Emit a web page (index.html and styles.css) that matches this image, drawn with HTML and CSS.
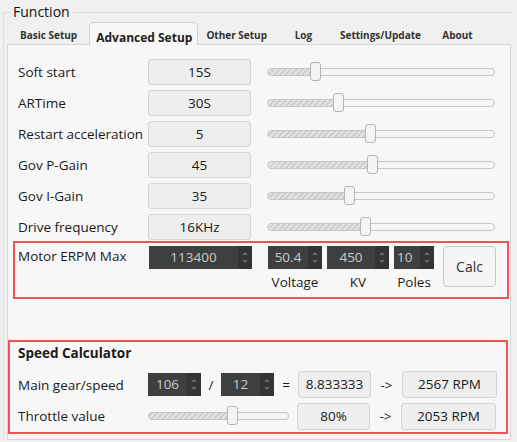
FILE: index.html
```html
<!DOCTYPE html>
<html lang="en">
<head>
    <meta charset="UTF-8">
    <title>Function</title>
    <link rel="stylesheet" href="styles.css">
</head>
<body>
    <fieldset class="group">
        <legend>Function</legend>
        <div class="tabs">
            <div class="tab">Basic Setup</div>
            <div class="tab active">Advanced Setup</div>
            <div class="tab">Other Setup</div>
            <div class="tab">Log</div>
            <div class="tab">Settings/Update</div>
            <div class="tab">About</div>
        </div>
        <div class="pane">
            <div class="rows">
                <div class="row">
                    <span class="label">Soft start</span>
                    <div class="value">15S</div>
                    <div class="slider"><div class="fill" style="width: 21%"></div><div class="handle" style="left: 21%"></div></div>
                </div>
                <div class="row">
                    <span class="label">ARTime</span>
                    <div class="value">30S</div>
                    <div class="slider"><div class="fill" style="width: 31%"></div><div class="handle" style="left: 31%"></div></div>
                </div>
                <div class="row">
                    <span class="label">Restart acceleration</span>
                    <div class="value">5</div>
                    <div class="slider"><div class="fill" style="width: 45%"></div><div class="handle" style="left: 45%"></div></div>
                </div>
                <div class="row">
                    <span class="label">Gov P-Gain</span>
                    <div class="value">45</div>
                    <div class="slider"><div class="fill" style="width: 46%"></div><div class="handle" style="left: 46%"></div></div>
                </div>
                <div class="row">
                    <span class="label">Gov I-Gain</span>
                    <div class="value">35</div>
                    <div class="slider"><div class="fill" style="width: 36%"></div><div class="handle" style="left: 36%"></div></div>
                </div>
                <div class="row">
                    <span class="label">Drive frequency</span>
                    <div class="value">16KHz</div>
                    <div class="slider"><div class="fill" style="width: 43%"></div><div class="handle" style="left: 43%"></div></div>
                </div>
            </div>

            <div class="box erpm">
                <span class="label">Motor ERPM Max</span>
                <div class="spin wide"><span class="num">113400</span><span class="arrows"></span></div>
                <div class="param first">
                    <div class="spin volt"><span class="num">50.4</span><span class="arrows"></span></div>
                    <span>Voltage</span>
                </div>
                <div class="param">
                    <div class="spin kv"><span class="num">450</span><span class="arrows"></span></div>
                    <span>KV</span>
                </div>
                <div class="param">
                    <div class="spin poles"><span class="num">10</span><span class="arrows"></span></div>
                    <span>Poles</span>
                </div>
                <button class="calc">Calc</button>
            </div>

            <div class="box speed">
                <div class="title">Speed Calculator</div>
                <div class="calc-row">
                    <span class="label">Main gear/speed</span>
                    <div class="spin gear"><span class="num">106</span><span class="arrows"></span></div>
                    <span class="op slash">/</span>
                    <div class="spin gear"><span class="num">12</span><span class="arrows"></span></div>
                    <span class="op eq">=</span>
                    <div class="value ratio">8.833333</div>
                    <span class="op arrow">-&gt;</span>
                    <div class="value rpm">2567 RPM</div>
                </div>
                <div class="calc-row">
                    <span class="label">Throttle value</span>
                    <div class="slider short"><div class="fill" style="width: 60%"></div><div class="handle" style="left: 60%"></div></div>
                    <div class="value ratio">80%</div>
                    <span class="op arrow">-&gt;</span>
                    <div class="value rpm">2053 RPM</div>
                </div>
            </div>
        </div>
    </fieldset>
</body>
</html>
```

FILE: styles.css
```css
body { margin: 0; height: 442px; background: #f0f0f0; font-family: "Open Sans", "Noto Sans", sans-serif; font-size: 13.5px; color: #1a1a1a; overflow: hidden; }
.group { margin: 4px 5px 0 3px; padding: 0 0 0 3px; border: 1px solid #dcdcdc; border-right: none; border-bottom: none; }
.group legend { font-size: 14px; padding: 0 3px; margin-left: 3px; line-height: 16px; color: #111; }
.tabs { display: flex; align-items: flex-end; height: 22px; margin-top: 2px; padding-left: 3px; white-space: nowrap; }
.tab { font-weight: bold; font-size: 10px; color: #333; padding: 4px 11px 0 10px; min-width: 31px; text-align: center; height: 18px; line-height: 18px; }
.tab.active { font-size: 12px; color: #222; background: #f7f7f7; border: 1px solid #d2d2d2; border-bottom: none; border-radius: 5px 5px 0 0; height: 18px; padding: 4px 5px 0 6px; line-height: 22px; margin: 0 -2px 0 1px; position: relative; top: 1px; z-index: 1; }
.pane { background: #f7f7f7; border: 1px solid #d6d6d6; height: 394px; width: 502px; }
.rows { display: flex; flex-direction: column; gap: 5px; padding: 14px 0 0 10px; }
.row { display: flex; align-items: center; height: 26px; }
.label { width: 130px; flex: none; }
.value { width: 101px; height: 24px; line-height: 24px; text-align: center; background: #eeeeee; border: 1px solid #d4d4d4; border-radius: 3px; flex: none; }
.slider { position: relative; width: 226px; height: 6px; margin-left: 16px; background: #f6f6f6; border: 1px solid #c6c6c6; border-radius: 4px; }
.fill { height: 100%; border-radius: 4px 0 0 4px; background: repeating-linear-gradient(-45deg, #cfcfcf 0 2px, #e3e3e3 2px 4px); }
.handle { position: absolute; top: -7px; margin-left: -5px; width: 9px; height: 17px; background: #f4f4f4; border: 1px solid #b4b4b4; border-radius: 3px; }
.box { border: 2px solid #f25252; }
.erpm { display: flex; align-items: flex-start; margin: 1px 1px 0 5px; height: 51px; padding: 3px 0 0 3px; }
.erpm .label { padding-top: 1px; width: 131px; }
.spin { display: flex; height: 23px; background: #3e403f; color: #cccccc; flex: none; }
.spin .num { flex: 1; text-align: center; line-height: 23px; }
.arrows { width: 14px; background: #333534; position: relative; }
.arrows::before, .arrows::after { content: ""; position: absolute; left: 4px; border-left: 3px solid transparent; border-right: 3px solid transparent; }
.arrows::before { top: 6px; border-bottom: 3px solid #6a6a6a; }
.arrows::after { bottom: 6px; border-top: 3px solid #6a6a6a; }
.wide { width: 103px; }
.param { display: flex; flex-direction: column; align-items: center; margin-left: 5px; }
.param > span { margin-top: 4px; }
.param.first { margin-left: 16px; }
.volt { width: 54px; }
.kv { width: 62px; }
.poles { width: 40px; }
.poles .num { text-align: left; padding-left: 3px; }
.calc { margin-left: 9px; width: 53px; height: 41px; font: inherit; font-size: 14px; color: #333; background: #f5f5f5; border: 1px solid #c9c9c9; border-radius: 4px; }
.speed { margin: 41px 2px 0 0; height: 88px; padding: 2px 0 0 8px; }
.title { font-weight: bold; height: 18px; }
.calc-row { display: flex; align-items: center; height: 27px; margin-top: 9px; }
.calc-row + .calc-row { margin-top: 4px; height: 28px; }
.gear { width: 53px; }
.op { width: 20px; text-align: center; flex: none; }
.slash { width: 20px; }
.eq { width: 24px; }
.arrow { width: 31px; }
.ratio { width: 71px; height: 25px; line-height: 25px; }
.rpm { width: 93px; height: 25px; line-height: 25px; }
.slider.short { width: 139px; margin: 0 8px 0 0; }
```
